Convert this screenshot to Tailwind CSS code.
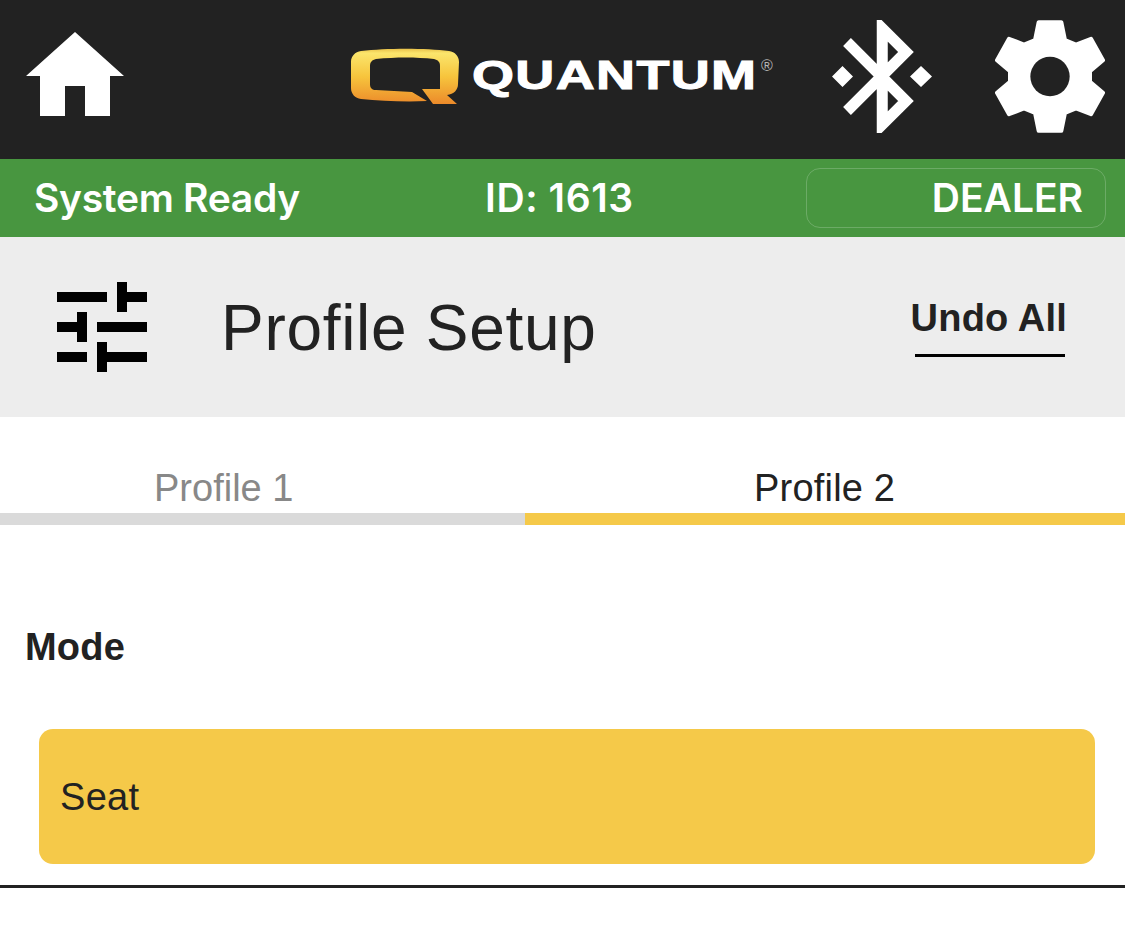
<!DOCTYPE html>
<html lang="en">
<head>
  <meta charset="UTF-8" />
  <meta name="viewport" content="width=device-width, initial-scale=1.0" />
  <title>Profile Setup</title>
  <script src="https://cdn.jsdelivr.net/npm/@tailwindcss/browser@4"></script>
</head>
<body class="bg-white w-[1125px] h-[942px] overflow-hidden font-['Liberation_Sans',sans-serif] text-[#222222]">

  <!-- top bar -->
  <header class="h-[159px] bg-[#222222] flex items-center pl-[26px] pr-[20px]">
    <svg class="w-[98px] h-[84px] shrink-0 mt-[-11px]" viewBox="0 0 98 84" fill="#fff">
      <path d="M49 0 L98 44 L84 44 L84 84 L59 84 L59 54 L39 54 L39 84 L14 84 L14 44 L0 44 Z" />
    </svg>

    <div class="ml-[227px] flex items-start w-[481px] h-[56px] mt-[-7px]">
      <svg class="w-[108px] h-[56px] shrink-0" viewBox="0 0 108 56">
        <defs>
          <linearGradient id="q" x1="0" y1="0" x2="0" y2="1">
            <stop offset="0" stop-color="#e9c24a" />
            <stop offset="0.08" stop-color="#fbe56c" />
            <stop offset="0.5" stop-color="#f7c53d" />
            <stop offset="1" stop-color="#ec8a2a" />
          </linearGradient>
        </defs>
        <path fill="url(#q)" d="M10 3 C35 0 75 0 98 3 C104 4 108 8 108 14 L107 36 C107 42 103 46 96 47 L106 56 L82 56 L71 41 L89 41 L89 18 C89 14 87 12 83 11 C65 9 45 9 25 11 C21 12 19 14 19 18 L19 36 C19 40 21 42 25 42 L61 44 L76 53 C55 54 30 53 10 51 C4 50 0 46 0 40 L0 14 C0 8 4 4 10 3 Z" />
      </svg>
      <div class="ml-[13px] mt-[9px] w-[289px] shrink-0 font-bold text-[40px] leading-[36px] tracking-[1px] text-white [-webkit-text-stroke:1px_white] origin-left scale-x-[1.35] whitespace-nowrap">QUANTUM</div>
      <span class="mt-[8px] text-[16px] leading-[20px] text-[#b5b5b5]">®</span>
    </div>

    <svg class="w-[100px] h-[113px] shrink-0 mt-[-6px]" viewBox="0 0 100 113" fill="none">
      <path d="M15 22 L74 81 L50.25 104.6 L50.25 8.4 L74 32 L15 91" stroke="#fff" stroke-width="11" />
      <path d="M0 56.5 L10.5 46 L21 56.5 L10.5 67 Z M78 56.5 L89 46 L100 56.5 L89 67 Z" fill="#fff" />
    </svg>

    <svg class="w-[110px] h-[113px] shrink-0 ml-auto mt-[-6px]" viewBox="525 60 330 338">
      <path fill="#fff" stroke="#fff" stroke-width="12" stroke-linejoin="round" d="M656 66 L724 66 L735 120 L768 133 L813 116 L849 180 L810 213 L810 245 L849 278 L813 342 L768 325 L735 338 L724 392 L656 392 L645 338 L612 325 L567 342 L531 278 L570 245 L570 213 L531 180 L567 116 L612 133 L645 120 Z" />
      <circle cx="690" cy="229" r="59" fill="#222222" />
    </svg>
  </header>

  <!-- status bar -->
  <div class="h-[78px] bg-[#489640] flex items-center pl-[34px] pr-[19px] text-white font-['Inter',sans-serif] font-semibold text-[39px]">
    <span class="w-[451px] tracking-[-0.3px]">System Ready</span>
    <span class="w-[321px] tracking-[0.6px]">ID: 1613</span>
    <div class="w-[300px] h-[60px] rounded-[14px] border border-white/20 flex items-center justify-end pr-[22px]">DEALER</div>
  </div>

  <!-- title row -->
  <div class="h-[180px] bg-[#ededed] flex items-center pl-[57px] pr-[58px]">
    <svg class="w-[90px] h-[90px] shrink-0 mt-[-1px]" viewBox="0 0 90 90" fill="#000">
      <path d="M0 10h50v10H0zM60 0h10v10h20v10H70v10H60zM20 30h10v30H20V50H0V40h20zM40 40h50v10H40zM0 70h30v10H0zM40 60h10v10h40v10H50v10H40z" />
    </svg>
    <h1 class="ml-[74px] text-[64px] leading-none tracking-[0.7px] mt-[2px]">Profile Setup</h1>
    <div class="ml-auto mt-[-2px] flex flex-col items-center font-bold text-[38px] leading-[44px] tracking-[0.2px]">
      <span>Undo All</span>
      <div class="w-[150px] h-[3px] mt-[14px] ml-[2px] bg-black"></div>
    </div>
  </div>

  <!-- tabs -->
  <div class="flex pt-[48px]">
    <div class="w-[525px] h-[60px] border-b-[12px] border-[#dadada] text-[#888888] text-[38px] leading-[46px] pl-[154px]">Profile 1</div>
    <div class="w-[600px] h-[60px] border-b-[12px] border-[#f5c949] text-[38px] leading-[46px] tracking-[0.2px] pl-[229px]">Profile 2</div>
  </div>

  <!-- mode -->
  <section class="pt-[99px]">
    <h2 class="pl-[25px] font-bold text-[38px] leading-[46px] tracking-[0.2px]">Mode</h2>
    <div class="px-[30px] pt-[59px] pb-[21px] border-b-[3px] border-[#222222]">
      <div class="ml-[9px] h-[135px] rounded-[14px] bg-[#f5c949] flex items-center pl-[21px] pt-[2px] text-[38px] tracking-[0.3px]">Seat</div>
    </div>
  </section>
</body>
</html>
